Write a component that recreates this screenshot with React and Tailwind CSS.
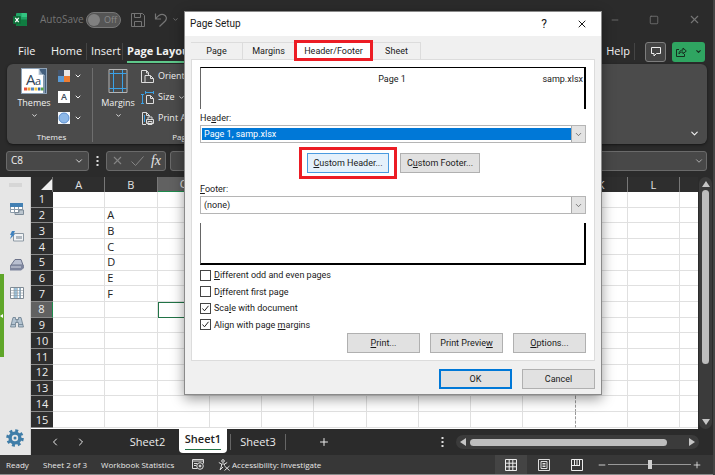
import { useState } from "react";
import { ChevronDown, ChevronLeft, ChevronRight, Minus, Plus, Square, X } from "lucide-react";

const columns = ["A", "B", "C", "D", "E", "F", "G", "H", "I", "J", "K", "L"];
const rows = Array.from({ length: 15 }, (_, i) => i + 1);
const cells = { B2: "A", B3: "B", B4: "C", B5: "D", B6: "E", B7: "F" };

function ExcelLogo() {
  return (
    <svg width="14" height="14" viewBox="0 0 14 14">
      <rect x="3" y="0" width="11" height="13" rx="1" fill="#21a366" />
      <path d="M8.5 0H13a1 1 0 0 1 1 1v3H8.500z" fill="#33c481" />
      <path d="M3 6.500h11V12a1 1 0 0 1-1 1H4a1 1 0 0 1-1-1z" fill="#107c41" />
      <rect x="0" y="3" width="8" height="8" rx="1" fill="#0f6f3a" />
      <path d="M2.300 4.800l3.400 4.400M5.700 4.800L2.300 9.200" stroke="#fff" strokeWidth="1.200" />
    </svg>
  );
}

function TitleBar() {
  return (
    <header className="flex h-[39px] items-center pr-3 pl-[13px] text-[#757575]">
      <ExcelLogo />
      <span className="ml-[13px] w-[44px] text-[10px] whitespace-nowrap">AutoSave</span>
      <button className="ml-[2px] flex h-4 w-[35px] items-center gap-1 rounded-full border border-[#777] bg-[#555] pl-px text-[9px] text-[#8a8a8a]">
        <span className="size-3 rounded-full bg-[#808080]" />
        Off
      </button>
      <button aria-label="Save" className="ml-[10px]">
        <svg width="14" height="14" viewBox="0 0 14 14" fill="none" stroke="currentColor">
          <path d="M.5.500h11l2 2v11H.500zM3.500.500v4h6v-4M3.500 13.500v-5h7v5" />
        </svg>
      </button>
      <button aria-label="Undo" className="ml-[9px]">
        <svg width="14" height="14" viewBox="0 0 14 14" fill="none" stroke="currentColor" strokeWidth="1.200">
          <path d="M1.500.500v5.500h5.500M1.700 5.800C4 2.500 7 .800 9.600 1.600c3 1 3.600 4 1.600 6.400L5.500 13.500" />
        </svg>
      </button>
      <ChevronDown size={7} strokeWidth={3} className="ml-1" />
      <div className="ml-auto flex items-center gap-[29px]">
        <button aria-label="Minimize"><Minus size={10} strokeWidth={2} /></button>
        <button aria-label="Maximize"><Square size={10} strokeWidth={2} /></button>
        <button aria-label="Close"><X size={13} strokeWidth={2} /></button>
      </div>
    </header>
  );
}

function RibbonTabs() {
  return (
    <nav className="flex h-[25px] items-center pr-2 text-[11px] font-medium text-[#f3f3f3]">
      <a href="#file" className="ml-[18px] w-[33px]">File</a>
      <a href="#home" className="w-[36px] border-r border-[#444]">Home</a>
      <a href="#insert" className="w-[36px] border-r border-[#444] pl-1">Insert</a>
      <a href="#page-layout" className="ml-1 border-b-2 border-[#5fc98b] leading-5 font-bold whitespace-nowrap">Page Layout</a>
      <a href="#help" className="ml-auto border-r border-[#444] pr-1">Help</a>
      <button aria-label="Comments" className="ml-[10px] flex h-5 w-[21px] items-center justify-center rounded-[3px] border border-[#7d7d7d] bg-[#444]">
        <svg width="10" height="10" viewBox="0 0 10 10" fill="none" stroke="#eee">
          <path d="M.500.500h9v6h-4l-2.500 2.500v-2.500h-2.500z" />
        </svg>
      </button>
      <button aria-label="Share" className="ml-[6px] flex h-5 w-[33px] items-center justify-center gap-2 rounded-[3px] bg-[#2fa561] text-[#16301f]">
        <svg width="11" height="10" viewBox="0 0 11 10" fill="none" stroke="currentColor">
          <path d="M3 2.500H.500v7h8V7M3 7c0-2.500 1.500-4 4-4V1l3.300 3L7 6.800V5C5 5 4 5.500 3 7z" />
        </svg>
        <ChevronDown size={7} strokeWidth={4} />
      </button>
    </nav>
  );
}

function Ribbon() {
  return (
    <section className="mr-[6px] ml-[7px] flex h-20 rounded-md bg-[#4b4b4b] text-[9px] text-[#f0f0f0] shadow-sm shadow-black/40">
      <div className="mt-1 mb-[2px] flex w-[86px] flex-col border-r border-[#6e6e6e]">
        <div className="flex gap-[7px] pl-[10px]">
          <button className="flex w-[34px] flex-col items-center">
            <svg width="26" height="26" viewBox="0 0 26 26">
              <rect width="26" height="26" fill="#8fa3b8" />
              <path d="M1 1h17v6h7v18H1z" fill="#fff" />
              <path d="M18 1h7v24h-3V7z" fill="#44607e" />
              <path d="M18 1v6h5v18" fill="none" stroke="#c5d3df" />
              <path d="M18 1v6h4v12h-4z" fill="#fff" />
              <text x="5" y="17" fontSize="15" fill="#2f4358" fontFamily="Open Sans">A</text>
              <text x="14" y="17" fontSize="11" fill="#2f4358" fontFamily="Open Sans">a</text>
              <path d="M2 19h20v4H2z" fill="#fff" />
              <path d="M3 19.500h3v3H3z" fill="#e8503a" />
              <path d="M6.500 19.500h3v3h-3z" fill="#f2a33a" />
              <path d="M10 19.500h3v3h-3z" fill="#4f86c6" />
              <path d="M13.500 19.500h3v3h-3z" fill="#f3c43c" />
              <path d="M17 19.500h2.500v3H17z" fill="#2b62b0" />
              <path d="M20 19.500h2.500v3H20z" fill="#58a548" />
            </svg>
            <span className="mt-[2px] leading-[14px]">Themes</span>
            <ChevronDown size={7} strokeWidth={3} className="mt-[2px]" />
          </button>
          <div className="flex flex-col gap-[9px] pt-[2px]">
            <button aria-label="Colors" className="flex items-center gap-1">
              <svg width="12" height="12" viewBox="0 0 12 12">
                <path d="M0 0h6v6H0z" fill="#44546a" />
                <path d="M6 0h6v6H6z" fill="#e7e6e6" />
                <path d="M0 6h6v6H0z" fill="#5b9bd5" />
                <path d="M6 6h6v6H6z" fill="#ed7d31" />
              </svg>
              <ChevronDown size={8} strokeWidth={3} />
            </button>
            <button aria-label="Fonts" className="flex items-center gap-1">
              <span className="size-3 bg-white leading-3 font-semibold text-[#3b4a5a]">A</span>
              <ChevronDown size={8} strokeWidth={3} />
            </button>
            <button aria-label="Effects" className="flex items-center gap-1">
              <svg width="12" height="12" viewBox="0 0 12 12">
                <rect width="12" height="12" fill="#f4f8fc" />
                <circle cx="6" cy="6" r="5" fill="#8db8e8" stroke="#5b8fd0" />
              </svg>
              <ChevronDown size={8} strokeWidth={3} />
            </button>
          </div>
        </div>
        <span className="mt-auto pl-1 text-center text-[8px] leading-[10px]">Themes</span>
      </div>
      <div className="mt-1 mb-[2px] flex w-[180px] flex-col">
        <div className="flex gap-[6px] pl-2">
          <button className="flex w-[34px] flex-col items-center">
            <svg width="20" height="26" viewBox="0 0 20 26" fill="none">
              <path d="M1 1.500h18v23H1z" stroke="#b5b5b5" />
              <path d="M5.500 2v22M14.500 2v22M1.500 5.500h17M1.500 20.500h17" stroke="#3ba1e6" />
            </svg>
            <span className="mt-[2px] leading-[14px]">Margins</span>
            <ChevronDown size={7} strokeWidth={3} className="mt-[2px]" />
          </button>
          <div className="flex flex-col gap-[5px]">
            <button className="flex h-4 items-center gap-1">
              <svg width="13" height="13" viewBox="0 0 13 13" fill="none" stroke="#ddd">
                <path d="M4 12.500H.500v-12h5l2 2V5M4 5.500h5.500l3 3v4H4zM5.500.500v2.500h2M9.500 5.500v3h3" />
              </svg>
              Orientation
            </button>
            <button className="flex h-4 items-center gap-1">
              <svg width="13" height="13" viewBox="0 0 13 13" fill="none">
                <path d="M1.500 3v10M0 3.500h3M0 12.500h3M4 1.500h9M4.500 0v3M12.500 0v3" stroke="#3ba1e6" />
                <path d="M5.500 4.500h4l3 3v5h-7zM9.500 4.500v3h3" stroke="#ddd" />
              </svg>
              Size
              <ChevronDown size={7} strokeWidth={3} />
            </button>
            <button className="flex h-4 items-center gap-1">
              <svg width="13" height="13" viewBox="0 0 13 13" fill="none" stroke="#ddd">
                <path d="M5 12.500H1.500v-12h4l3 3v1M5.500.500v3h3M5.500 7.500h7v4h-7zM7 7V5h4v2M7 9.500h4v3H7z" />
                <path d="M3.500 3v7" stroke="#3ba1e6" />
              </svg>
              Print Area
            </button>
          </div>
        </div>
        <span className="mt-auto pl-5 text-center text-[8px] leading-[10px]">Page Setup</span>
      </div>
      <button aria-label="Ribbon options" className="mt-auto mr-[7px] mb-[5px] ml-auto">
        <ChevronDown size={11} strokeWidth={2.500} />
      </button>
    </section>
  );
}

function FormulaBar() {
  return (
    <div className="flex h-[33px] items-center pr-[6px] pl-[6px]">
      <button className="flex h-5 w-[83px] items-center justify-between rounded-[3px] border border-[#6a6a6a] bg-[#484848] px-1 text-[10px] text-[#f0f0f0]">
        C8
        <ChevronDown size={10} strokeWidth={2} />
      </button>
      <svg width="3" height="10" viewBox="0 0 3 10" fill="#ddd" className="mx-[7px]">
        <path d="M.500 0h2v2h-2zM.500 4h2v2h-2zM.500 8h2v2h-2z" />
      </svg>
      <div className="flex h-5 w-[60px] items-center justify-between rounded-[3px] border border-[#6a6a6a] bg-[#484848] px-1 text-[#858585]">
        <X size={13} strokeWidth={2} />
        <svg width="13" height="10" viewBox="0 0 13 10" fill="none" stroke="currentColor">
          <path d="M.500 5.500l4 4 8-9" />
        </svg>
        <span className="font-['Liberation_Serif',serif] text-[14px] leading-4 text-[#e5e5e5] italic">fx</span>
      </div>
      <label className="ml-1 flex h-5 flex-1 items-center rounded-[3px] border border-[#6a6a6a] bg-[#484848] pr-[2px]">
        <input aria-label="Formula" className="min-w-0 flex-1 bg-transparent text-[10px] text-white outline-none" />
        <ChevronDown size={10} strokeWidth={2} className="text-[#c0c0c0]" />
      </label>
    </div>
  );
}

function SidePane() {
  return (
    <aside className="flex w-[31px] flex-col border-r border-[#cfcfcf] bg-[#e6e6e6]">
      <div className="mx-auto mt-[6px] h-1 w-[13px] bg-[#d6d6d6]" />
      <div className="flex flex-1">
        <div className="mt-[87px] flex h-[83px] w-1 items-center bg-[#5fa629]">
          <svg width="4" height="4" viewBox="0 0 4 4" fill="#fff"><path d="M3 0v4L0 2z" /></svg>
        </div>
        <div className="flex flex-1 flex-col items-center pt-4 pb-2">
          <div className="flex flex-col gap-4">
            <svg width="14" height="12" viewBox="0 0 14 12">
              <path d="M.500 2h12v7.500H.500z" fill="#fff" stroke="#8c9cab" />
              <path d="M0 0h13v4H0z" fill="#4380b3" />
              <path d="M1 6.500h12M4.500 4v6M8.500 4v6" stroke="#8c9cab" />
              <path d="M9 7h4.500v4.500H5V9.500h4z" fill="#bcc6cf" stroke="#7d8b98" />
            </svg>
            <svg width="14" height="12" viewBox="0 0 14 12">
              <path d="M3.500 2.500h10v7.500h-10z" fill="#f1f3f5" stroke="#8c98a3" />
              <path d="M6 5h6v3H6z" fill="#b0b8c0" />
              <path d="M2 0h3L3.500 3H5L0 8l1.500-4H0z" fill="#3f82bf" />
            </svg>
            <svg width="14" height="12" viewBox="0 0 14 12">
              <path d="M5 .500h6l2 5.500H1z" fill="#b9bfd0" stroke="#6b7289" />
              <path d="M0 6h14v3l-3 2.500H0z" fill="#7e859d" />
              <path d="M1 8h10" stroke="#d5d9e4" />
            </svg>
            <svg width="14" height="12" viewBox="0 0 14 12">
              <path d="M.500.500h13v11H.500z" fill="#fff" stroke="#7f8a94" />
              <path d="M4 1h3v10H4zM9 1h2v10H9z" fill="#9dc3dc" />
              <path d="M4 1v10M7.500 1v10M10.500 1v10M1 3.500h12M1 6h12M1 8.500h12" stroke="#8d979f" strokeWidth=".6" />
            </svg>
            <svg width="14" height="14" viewBox="0 -1 14 13" stroke="#6a7d8e" strokeWidth=".8">
              <path d="M3 1h2.500v2H8.500V1H11l2.500 9.500h-5V6h-3v4.500h-5z" fill="#b3c3d1" />
              <path d="M1 8h4M9 8h4M7 3v3" fill="none" />
            </svg>
          </div>
          <svg width="18" height="18" viewBox="0 0 18 18" className="mt-auto mr-1">
            <circle cx="9" cy="9" r="7.300" fill="none" stroke="#3f7da8" strokeWidth="3" strokeDasharray="2.867" />
            <circle cx="9" cy="9" r="4.900" fill="none" stroke="#3f7da8" strokeWidth="3.400" />
            <circle cx="9" cy="9" r="1.500" fill="#3f7da8" />
          </svg>
        </div>
      </div>
    </aside>
  );
}

function Sheet() {
  return (
    <div className="h-[252px] min-w-0 flex-1 overflow-hidden bg-white">
      <table className="h-[251px] w-full table-fixed border-separate border-spacing-0 text-[11px] leading-3 text-[#222]">
        <colgroup>
          <col className="w-[22px]" />
          {columns.map((c) => <col key={c} />)}
          <col className="w-[18px]" />
        </colgroup>
        <thead className="bg-[#2e2e2e] text-[#e3e3e3]">
          <tr className="h-[15px]">
            <th className="border-r border-[#777] p-0" aria-label="Select all">
              <svg width="11" height="11" viewBox="0 0 11 11" fill="#f0f0f0" className="ml-auto"><path d="M11 0v11H0z" /></svg>
            </th>
            {columns.map((c) => (
              <th
                key={c}
                className={c === "C" ? "border-r border-b border-r-[#777] border-b-[#1e8a4c] bg-[#616161] p-0 font-normal" : "border-r border-[#777] p-0 font-normal"}
              >
                {c}
              </th>
            ))}
            <th className="p-0" />
          </tr>
        </thead>
        <tbody>
          {rows.map((r) => (
            <tr key={r}>
              <th
                className={
                  r === 8
                    ? "border-r border-b border-r-[#1e8a4c] border-b-[#8a8a8a] bg-[#616161] p-0 font-normal text-[#eee]"
                    : "border-b border-[#8a8a8a] bg-[#2e2e2e] p-0 font-normal text-[#eee]"
                }
              >
                {r}
              </th>
              {columns.map((c) => (
                <td
                  key={c}
                  className={
                    c === "C" && r === 8
                      ? "border border-[#217346] p-0"
                      : c === "J"
                        ? "border-r border-b border-[#e0e0e0] border-r-[#999] p-0 [border-right-style:dashed]"
                        : "border-r border-b border-[#e0e0e0] p-0 pl-[2px]"
                  }
                >
                  {cells[c + r]}
                </td>
              ))}
              <td className="border-b border-[#e0e0e0] p-0" />
            </tr>
          ))}
        </tbody>
      </table>
    </div>
  );
}

function VerticalScrollbar() {
  return (
    <div className="flex w-[15px] justify-center bg-[#2b2b2b]">
      <div className="flex w-[13px] flex-col items-center rounded-full bg-[#3b3b3b] py-1 text-[#c6c6c6]">
        <svg width="8" height="6" viewBox="0 0 8 6" fill="currentColor"><path d="M4 0l4 6H0z" /></svg>
        <div className="mt-[3px] h-[174px] w-[7px] rounded-full bg-[#bdbdbd]" />
        <svg width="8" height="6" viewBox="0 0 8 6" fill="currentColor" className="mt-auto"><path d="M0 0h8L4 6z" /></svg>
      </div>
    </div>
  );
}

function SheetTabs() {
  return (
    <div className="flex h-[26px] items-start bg-[#2b2b2b] pr-[14px] text-[11px] leading-[26px] text-[#ececec]">
      <button aria-label="Previous sheet" className="ml-[18px] self-center"><ChevronLeft size={12} strokeWidth={2} /></button>
      <button aria-label="Next sheet" className="ml-[14px] self-center"><ChevronRight size={12} strokeWidth={2} /></button>
      <button className="ml-[29px] w-[63px] text-center">Sheet2</button>
      <button className="flex h-6 w-[48px] items-start justify-center rounded-b-[4px] bg-white font-semibold text-[#222]">
        <span className="border-b border-[#217346] leading-5">Sheet1</span>
      </button>
      <span className="ml-[3px] h-4 w-px self-center bg-[#666]" />
      <button className="w-[54px] text-center">Sheet3</button>
      <span className="h-4 w-px self-center bg-[#666]" />
      <button aria-label="New sheet" className="ml-[32px] self-center"><Plus size={12} strokeWidth={2} /></button>
      <svg width="3" height="10" viewBox="0 0 3 10" fill="#ddd" className="mr-3 ml-auto self-center">
        <path d="M.500 0h2v2h-2zM.500 4h2v2h-2zM.500 8h2v2h-2z" />
      </svg>
      <div className="flex h-[14px] w-[243px] items-center self-center rounded-full bg-[#3b3b3b] px-1 text-[#c6c6c6]">
        <svg width="6" height="8" viewBox="0 0 6 8" fill="currentColor"><path d="M6 0v8L0 4z" /></svg>
        <div className="ml-1 h-[7px] w-[197px] rounded-full bg-[#bdbdbd]" />
        <svg width="6" height="8" viewBox="0 0 6 8" fill="currentColor" className="ml-auto"><path d="M0 0l6 4-6 4z" /></svg>
      </div>
    </div>
  );
}

function StatusBar() {
  return (
    <footer className="flex h-5 items-center border-b border-[#8a8a8a] bg-[#373737] pr-[11px] pl-[6px] text-[8px] text-[#e8e8e8]">
      <span className="w-[37px]">Ready</span>
      <span className="w-[58px]">Sheet 2 of 3</span>
      <span className="w-[91px]">Workbook Statistics</span>
      <svg width="12" height="11" viewBox="0 0 12 11" fill="none" stroke="#ddd">
        <path d="M5 9.500H.500v-9h11v4" />
        <path d="M1 2h10M2 4.500h3M2 6.500h2" />
        <circle cx="8" cy="7" r="3.300" />
        <circle cx="8" cy="7" r="1" fill="#ddd" />
      </svg>
      <button className="ml-[14px] flex items-center gap-[2px]">
        <svg width="12" height="12" viewBox="0 0 12 12" fill="none" stroke="#ddd">
          <circle cx="5" cy="2" r="1.300" />
          <path d="M.800 3.500L3.500 5v2L2 11M9.200 3.500L6.500 5v1.500M3.500 5h3M2 11l3-3M6.500 7l5 4.500M11.500 7l-5 4.500" />
        </svg>
        Accessibility: Investigate
      </button>
      <div className="ml-auto flex h-full items-center">
        <button aria-label="Normal view" className="flex h-full w-8 items-center justify-center bg-[#444]">
          <svg width="12" height="12" viewBox="0 0 12 12" fill="none" stroke="#eee">
            <path d="M.500.500h11v11H.500zM4.200 0v12M7.800 0v12M0 4.200h12M0 7.800h12" />
          </svg>
        </button>
        <button aria-label="Page layout view" className="flex h-full w-[34px] items-center justify-center">
          <svg width="12" height="12" viewBox="0 0 12 12" fill="none" stroke="#ddd">
            <path d="M.500.500h11v11H.500zM3 2.500h6v7H3zM4.500 4.500h3M4.500 6h3M4.500 7.500h3" />
          </svg>
        </button>
        <button aria-label="Page break preview" className="flex h-full w-8 items-center justify-center">
          <svg width="12" height="12" viewBox="0 0 12 12" fill="none" stroke="#eee">
            <path d="M.500.500h11v11H.500zM3.500.500v6M8.500.500v6M6 0v6M1 6.500h8" />
          </svg>
        </button>
        <Minus size={10} strokeWidth={2} className="ml-1" />
        <input
          type="range"
          aria-label="Zoom"
          defaultValue="50"
          className="mx-px h-3 w-[83px] appearance-none bg-transparent [&::-webkit-slider-runnable-track]:h-px [&::-webkit-slider-runnable-track]:bg-[#999] [&::-webkit-slider-thumb]:-mt-1 [&::-webkit-slider-thumb]:h-[9px] [&::-webkit-slider-thumb]:w-1 [&::-webkit-slider-thumb]:appearance-none [&::-webkit-slider-thumb]:bg-[#d0d0d0]"
        />
        <Plus size={10} strokeWidth={2} />
      </div>
    </footer>
  );
}

function Picker({ id, options, highlighted }) {
  return (
    <div className="flex h-[18px] border border-[#b5b5b5] bg-white">
      <select
        id={id}
        className={
          highlighted
            ? "my-[2px] ml-px min-w-0 flex-1 appearance-none bg-[#0078d7] pl-[2px] leading-3 text-white outline-none"
            : "my-[2px] ml-px min-w-0 flex-1 appearance-none bg-white pl-[2px] leading-3 outline-none"
        }
      >
        {options.map((o) => <option key={o}>{o}</option>)}
      </select>
      <span className="flex w-[14px] items-center justify-center border-l border-[#aaa] bg-[#e3e3e3] text-[#555]">
        <ChevronDown size={9} strokeWidth={2} />
      </span>
    </div>
  );
}

function CheckRow({ checked, onChange, children }) {
  return (
    <label className="flex h-3 items-center gap-[3px] leading-3">
      <span className="grid">
        <input
          type="checkbox"
          checked={checked}
          onChange={onChange}
          className="peer col-start-1 row-start-1 size-[11px] appearance-none border border-[#444] bg-white"
        />
        <svg
          width="11"
          height="11"
          viewBox="0 0 11 11"
          fill="none"
          stroke="#222"
          className="pointer-events-none invisible col-start-1 row-start-1 peer-checked:visible"
        >
          <path d="M2.500 5.500l2 2.300 4-5" />
        </svg>
      </span>
      <span>{children}</span>
    </label>
  );
}

const pushButton = "h-5 border border-[#b0b0b0] bg-[#e1e1e1]";

function PageSetupDialog() {
  const [options, setOptions] = useState({ oddEven: false, first: false, scale: true, align: true });
  const toggle = (key) => () => setOptions({ ...options, [key]: !options[key] });

  return (
    <div
      role="dialog"
      aria-label="Page Setup"
      className="absolute top-[11px] left-[184px] w-[418px] border border-[#8a8a8a] bg-[#f0f0f0] font-['Roboto','Open_Sans',sans-serif] text-[9px] leading-3 text-[#1a1a1a] shadow-[0_4px_12px_rgba(0,0,0,0.4)]"
    >
      <div className="flex h-6 items-center bg-white pr-[13px] pl-[5px]">
        <span className="text-[10px]">Page Setup</span>
        <button aria-label="Help" className="ml-auto text-[12px]">?</button>
        <button aria-label="Close" className="ml-[29px]"><X size={12} strokeWidth={2} /></button>
      </div>
      <div className="px-[6px] pt-[5px] pb-[5px]">
        <div role="tablist" className="flex h-[18px] items-end">
          <button role="tab" className="h-[17px] w-[52px] border-t border-r border-[#dcdcdc]">Page</button>
          <button role="tab" className="h-[17px] w-[51px] border-t border-[#dcdcdc]">Margins</button>
          <button role="tab" aria-selected="true" className="z-10 -mb-[2px] h-[21px] w-[79px] border-3 border-[#ec1c24] bg-white">
            Header/Footer
          </button>
          <button role="tab" className="h-[17px] w-[48px] border-t border-r border-[#dcdcdc]">Sheet</button>
        </div>
        <div className="border border-[#dcdcdc] bg-white px-[8px] pt-[7px] pb-[7px]">
          <div className="grid h-[42px] grid-cols-3 border-t border-r-2 border-l border-black border-l-[#666] pt-[5px] pr-px">
            <span className="col-start-2 text-center">Page 1</span>
            <span className="text-right">samp.xlsx</span>
          </div>
          <label htmlFor="header" className="mt-[3px] mb-[1px] block">He<u>a</u>der:</label>
          <Picker id="header" highlighted options={["Page 1, samp.xlsx", "(none)"]} />
          <div className="mt-1 flex items-center gap-[3px] pl-[99px]">
            <div className="border-3 border-[#ec1c24] px-[5px] py-[3px]">
              <button className="h-5 w-[82px] border border-[#4a9be0] bg-[#e5f1fb]"><u>C</u>ustom Header...</button>
            </div>
            <button className="h-5 w-[80px] border border-[#b0b0b0] bg-[#e1e1e1]">C<u>u</u>stom Footer...</button>
          </div>
          <label htmlFor="footer" className="mt-1 mb-[1px] block"><u>F</u>ooter:</label>
          <Picker id="footer" options={["(none)", "Page 1"]} />
          <div className="mt-[9px] h-[42px] border-r-2 border-b-2 border-l border-black border-l-[#666]" />
          <div className="mt-1 flex h-[62px] flex-col justify-between">
            <CheckRow checked={options.oddEven} onChange={toggle("oddEven")}><u>D</u>ifferent odd and even pages</CheckRow>
            <CheckRow checked={options.first} onChange={toggle("first")}>D<u>i</u>fferent first page</CheckRow>
            <CheckRow checked={options.scale} onChange={toggle("scale")}>Sca<u>l</u>e with document</CheckRow>
            <CheckRow checked={options.align} onChange={toggle("align")}>Align with page <u>m</u>argins</CheckRow>
          </div>
          <div className="mt-[2px] flex justify-end gap-[10px]">
            <button className={`${pushButton} w-[73px]`}><u>P</u>rint...</button>
            <button className={`${pushButton} w-[73px]`}>Print Previe<u>w</u></button>
            <button className={`${pushButton} w-[73px]`}><u>O</u>ptions...</button>
          </div>
        </div>
        <div className="mt-2 flex justify-end gap-[10px]">
          <button className="h-5 w-[73px] border-2 border-[#0078d7] bg-[#e1e1e1]">OK</button>
          <button className={`${pushButton} w-[73px]`}>Cancel</button>
        </div>
      </div>
    </div>
  );
}

export default function App() {
  return (
    <div className="relative flex min-h-screen flex-col overflow-hidden border-r-2 border-[#444] bg-[#2b2b2b] font-['Open_Sans','Noto_Sans',sans-serif]">
      <TitleBar />
      <RibbonTabs />
      <Ribbon />
      <FormulaBar />
      <main className="flex flex-1">
        <SidePane />
        <div className="flex min-w-0 flex-1 flex-col">
          <div className="flex">
            <Sheet />
            <VerticalScrollbar />
          </div>
          <SheetTabs />
        </div>
      </main>
      <StatusBar />
      <PageSetupDialog />
    </div>
  );
}
